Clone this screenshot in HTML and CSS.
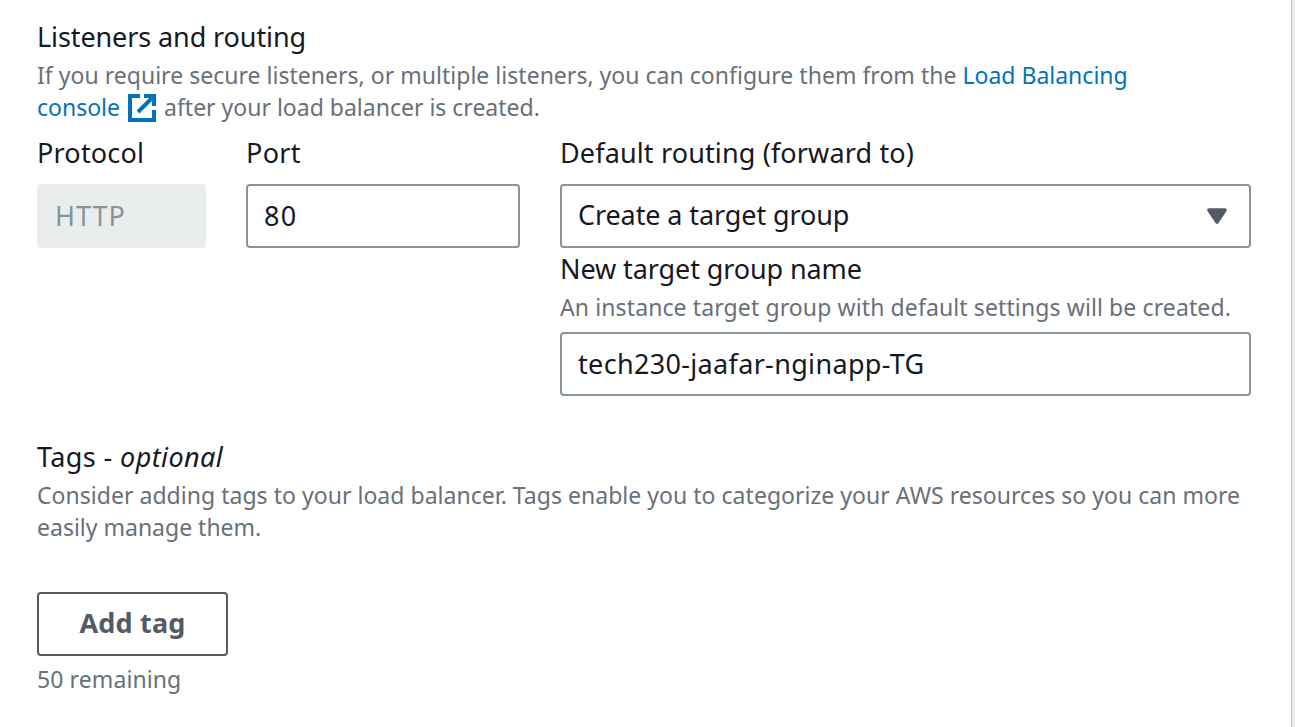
FILE: index.html
```html
<!DOCTYPE html>
<html lang="en">
<head>
<meta charset="utf-8">
<title>Load balancer</title>
<link rel="stylesheet" href="styles.css">
</head>
<body>
<main class="panel">
  <section class="routing">
    <h2 class="title"><span class="t-listeners">Listeners and routing</span></h2>
    <p class="hint"><span class="t-intro">If you require secure listeners, or multiple listeners, you can configure them from the</span> <a class="link">Load Balancing<br>console<svg class="external" viewBox="0 0 28 28"><path d="M12 2H2v24h24V16M16 2h10v10M26 2L10 18" fill="none" stroke="currentColor" stroke-width="4"/></svg></a>after your load balancer is created.</p>
    <div class="fields">
      <div class="field">
        <div class="label"><span class="t-protocol">Protocol</span></div>
        <div class="box disabled"><span class="t-http">HTTP</span></div>
      </div>
      <div class="field">
        <div class="label"><span class="t-port">Port</span></div>
        <div class="box"><span class="t-80">80</span></div>
      </div>
      <div class="field">
        <div class="label"><span class="t-default">Default routing (forward to)</span></div>
        <div class="box select"><span class="t-create">Create a target group</span><svg class="caret" viewBox="0 0 20 16"><path d="M2 2h16l-8 12z" fill="currentColor" stroke="currentColor" stroke-width="3.6" stroke-linejoin="round"/></svg></div>
        <div class="label compact"><span class="t-new">New target group name</span></div>
        <p class="hint name-hint"><span class="t-instance">An instance target group with default settings will be created.</span></p>
        <div class="box"><span class="t-tech">tech230-jaafar-nginapp-TG</span></div>
      </div>
    </div>
  </section>
  <section class="tags">
    <h2 class="title"><span class="t-tags">Tags - <em>optional</em></span></h2>
    <p class="hint"><span class="t-consider">Consider adding tags to your load balancer. Tags enable you to categorize your AWS resources so you can more</span><br>easily manage them.</p>
    <button class="add"><span class="t-add">Add tag</span></button>
    <p class="hint"><span class="t-remaining">50 remaining</span></p>
  </section>
</main>
</body>
</html>
```
FILE: styles.css
```css
* { box-sizing: border-box; }
body {
  margin: 0;
  height: 727px;
  overflow: hidden;
  background: #eaeded;
  color: #16191f;
  font: 27px/44px "Noto Sans", sans-serif;
  white-space: nowrap;
}
.panel {
  width: 1292px;
  height: 727px;
  padding: 15px 41px 0 37px;
  background: #fff;
  border-right: 1px solid #bcc2c2;
}
.title { margin: 0; font-size: 27px; font-weight: 400; line-height: 44px; }
.hint { margin: 0; color: #687078; font-size: 23px; line-height: 32px; }
.link { color: #0073bb; }
.external { width: 28px; height: 28px; margin: 0 8px; vertical-align: -6px; }
.fields { display: grid; grid-template-columns: 169px 274px 691px; gap: 40px; padding-top: 8px; align-items: start; }
.label { margin-bottom: 9px; }
.compact { margin: -1px 0 0; }
.box {
  display: flex;
  align-items: center;
  height: 64px;
  padding: 0 16px;
  border: 2px solid #879596;
  border-radius: 4px;
}
.disabled { background: #eaeded; border-color: #eaeded; color: #879596; }
.select { justify-content: space-between; }
.select .t-create { padding-bottom: 2px; }
.caret { width: 20px; height: 16px; margin-right: 6px; color: #545b64; }
.name-hint { margin-bottom: 9px; }
.tags { padding-top: 39px; }
.add {
  display: block;
  width: 191px;
  height: 64px;
  margin: 49px 0 7px;
  padding: 0 0 2px;
  background: #fff;
  border: 2px solid #545b64;
  border-radius: 4px;
  color: #545b64;
  font: 700 27px/44px "Noto Sans", sans-serif;
}
.t-listeners, .t-create, .t-new { letter-spacing: -0.1px; }
.t-protocol, .t-add { letter-spacing: 0.2px; }
.t-port { letter-spacing: 0.3px; }
.t-default { letter-spacing: 0.14px; }
.t-http { letter-spacing: 1px; }
.t-80 { letter-spacing: 1.2px; }
.t-tech { letter-spacing: 0.33px; }
.t-tags { letter-spacing: 0.4px; }
.t-intro { letter-spacing: 0.022px; }
.t-instance { letter-spacing: 0.11px; }
.t-consider { letter-spacing: 0.03px; }
.t-remaining { letter-spacing: 0.1px; }
```
